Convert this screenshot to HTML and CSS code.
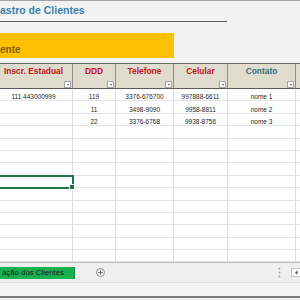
FILE: index.html
```html
<!DOCTYPE html>
<html lang="pt">
<head>
<meta charset="utf-8">
<link rel="stylesheet" href="styles.css">
</head>
<body>
<div class="sheet">
  <div class="top">
    <div class="title">astro de Clientes</div>
  </div>
  <div class="band"><span>ente</span></div>
  <div class="grid">
    <div class="hd red">Inscr. Estadual<span class="dd"></span></div>
    <div class="hd red">DDD<span class="dd"></span></div>
    <div class="hd red">Telefone<span class="dd"></span></div>
    <div class="hd red">Celular<span class="dd"></span></div>
    <div class="hd teal">Contato<span class="dd"></span></div>
    <div class="hd"></div>

    <div class="c">111 443000999</div><div class="c">119</div><div class="c">3376-676700</div><div class="c">997888-6611</div><div class="c">nome 1</div><div class="c"></div>
    <div class="c"></div><div class="c">11</div><div class="c">3498-9090</div><div class="c">9958-8811</div><div class="c">nome 2</div><div class="c"></div>
    <div class="c"></div><div class="c">22</div><div class="c">3376-6768</div><div class="c">9938-8756</div><div class="c">nome 3</div><div class="c"></div>
    <div class="c"></div><div class="c"></div><div class="c"></div><div class="c"></div><div class="c"></div><div class="c"></div>
    <div class="c"></div><div class="c"></div><div class="c"></div><div class="c"></div><div class="c"></div><div class="c"></div>
    <div class="c"></div><div class="c"></div><div class="c"></div><div class="c"></div><div class="c"></div><div class="c"></div>
    <div class="c"></div><div class="c"></div><div class="c"></div><div class="c"></div><div class="c"></div><div class="c"></div>
    <div class="c sel"></div><div class="c"></div><div class="c"></div><div class="c"></div><div class="c"></div><div class="c"></div>
    <div class="c"></div><div class="c"></div><div class="c"></div><div class="c"></div><div class="c"></div><div class="c"></div>
    <div class="c"></div><div class="c"></div><div class="c"></div><div class="c"></div><div class="c"></div><div class="c"></div>
    <div class="c"></div><div class="c"></div><div class="c"></div><div class="c"></div><div class="c"></div><div class="c"></div>
    <div class="c"></div><div class="c"></div><div class="c"></div><div class="c"></div><div class="c"></div><div class="c"></div>
    <div class="c"></div><div class="c"></div><div class="c"></div><div class="c"></div><div class="c"></div><div class="c"></div>
    <div class="c"></div><div class="c"></div><div class="c"></div><div class="c"></div><div class="c"></div><div class="c"></div>
  </div>
  <div class="tabs">
    <div class="tab">ação dos Clientes</div>
    <svg class="plus" width="9" height="9" viewBox="0 0 9 9"><circle cx="4.5" cy="4.5" r="4" fill="none" stroke="#8a8a8a" stroke-width="1"/><path d="M4.5 2.2v4.6M2.2 4.5h4.6" stroke="#6e6e6e" stroke-width="1"/></svg>
    <div class="spacer"></div>
    <svg class="dots" width="3" height="11" viewBox="0 0 3 11"><circle cx="1.5" cy="1.5" r="0.9" fill="#a0a0a0"/><circle cx="1.5" cy="5.5" r="0.9" fill="#a0a0a0"/><circle cx="1.5" cy="9.5" r="0.9" fill="#a0a0a0"/></svg>
    <div class="scroll"><svg width="7" height="7" viewBox="0 0 7 7"><path d="M4.5 1.5L2 3.5l2.5 2z" fill="#444"/></svg></div>
  </div>
  <div class="status"></div>
</div>
</body>
</html>
```

FILE: styles.css
```css
html, body {
  margin: 0;
  padding: 0;
  width: 300px;
  height: 300px;
  overflow: hidden;
  background: #f2f2f2;
  font-family: "Liberation Sans", Arial, sans-serif;
}
.sheet {
  width: 300px;
  height: 300px;
  overflow: hidden;
  display: flex;
  flex-direction: column;
}
.top {
  border-top: 1px solid #a3a3a3;
  height: 32px;
}
.title {
  width: 227px;
  padding-top: 3px;
  height: 17px;
  line-height: 13px;
  border-bottom: 1px solid #5e5e5e;
  font-size: 10.5px;
  font-weight: bold;
  color: #3a82ab;
  white-space: nowrap;
}
.band {
  width: 174px;
  height: 25px;
  background: #ffc000;
  display: flex;
  align-items: flex-end;
  padding-bottom: 2px;
  box-sizing: border-box;
}
.band span {
  font-size: 10px;
  line-height: 12px;
  font-weight: bold;
  color: #7f6000;
}
.grid {
  margin-top: 5px;
  margin-left: -5px;
  display: grid;
  grid-template-columns: 78px 43px 58px 54px 68px 30px;
  grid-template-rows: 25px repeat(14, 12.4px);
  border-top: 1px solid #6a6a6a;
  background: #fff;
}
.hd {
  background: #dfdcce;
  border-right: 1px solid #8e8e8e;
  border-bottom: 1px solid #5a5a5a;
  display: flex;
  flex-direction: column;
  align-items: center;
  padding-top: 2px;
  font-size: 8.4px;
  line-height: 10px;
  font-weight: bold;
  white-space: nowrap;
  box-sizing: border-box;
}
.red { color: #c0121c; }
.teal { color: #3a6d7c; }
.dd {
  margin-top: auto;
  align-self: flex-end;
  margin-right: 1px;
  margin-bottom: 0;
  width: 7px;
  height: 7px;
  box-sizing: border-box;
  background: #fff;
  border: 1px solid #a5a5a5;
  display: flex;
  align-items: center;
  justify-content: center;
}
.dd::before {
  content: "";
  border-left: 1.5px solid transparent;
  border-right: 1.5px solid transparent;
  border-top: 2px solid #555;
}
.c {
  border-right: 1px solid #dcdcdc;
  border-bottom: 1px solid #e3e3e3;
  font-size: 6.5px;
  line-height: 7px;
  color: #1e1e1e;
  display: flex;
  align-items: flex-end;
  justify-content: center;
  white-space: nowrap;
  box-sizing: border-box;
  min-height: 0;
}
.sel {
  position: relative;
  outline: 2px solid #217346;
  outline-offset: -1px;
  z-index: 1;
}
.sel::after {
  content: "";
  position: absolute;
  right: -3px;
  bottom: -3px;
  width: 4px;
  height: 4px;
  background: #217346;
  border: 1px solid #fff;
}
.tabs {
  height: 20px;
  box-sizing: border-box;
  border-top: 1px solid #bcbcbc;
  background: #efefef;
  display: flex;
  align-items: center;
}
.tab {
  width: 75px;
  height: 12px;
  background: #17b04f;
  white-space: nowrap;
  font-size: 7.8px;
  line-height: 12px;
  padding-left: 2px;
  color: #1c1c1c;
  border-right: 1px solid #0f8a3c;
  box-sizing: border-box;
}
.plus {
  margin-left: 20.5px;
  display: block;
}
.spacer { flex: 1; }
.dots {
  display: block;
  margin-right: 10px;
}
.scroll {
  width: 10px;
  height: 9px;
  background: #fff;
  border: 1px solid #c4c4c4;
  box-sizing: border-box;
  display: flex;
  align-items: center;
  justify-content: center;
  margin-right: -1px;
}
.scroll svg { display: block; }
.status {
  height: 16px;
  flex: none;
  box-sizing: border-box;
  background: #f3f3f3;
  border-top: 1px solid #e2e2e2;
  border-bottom: 2px solid #7b7b7b;
}
```
